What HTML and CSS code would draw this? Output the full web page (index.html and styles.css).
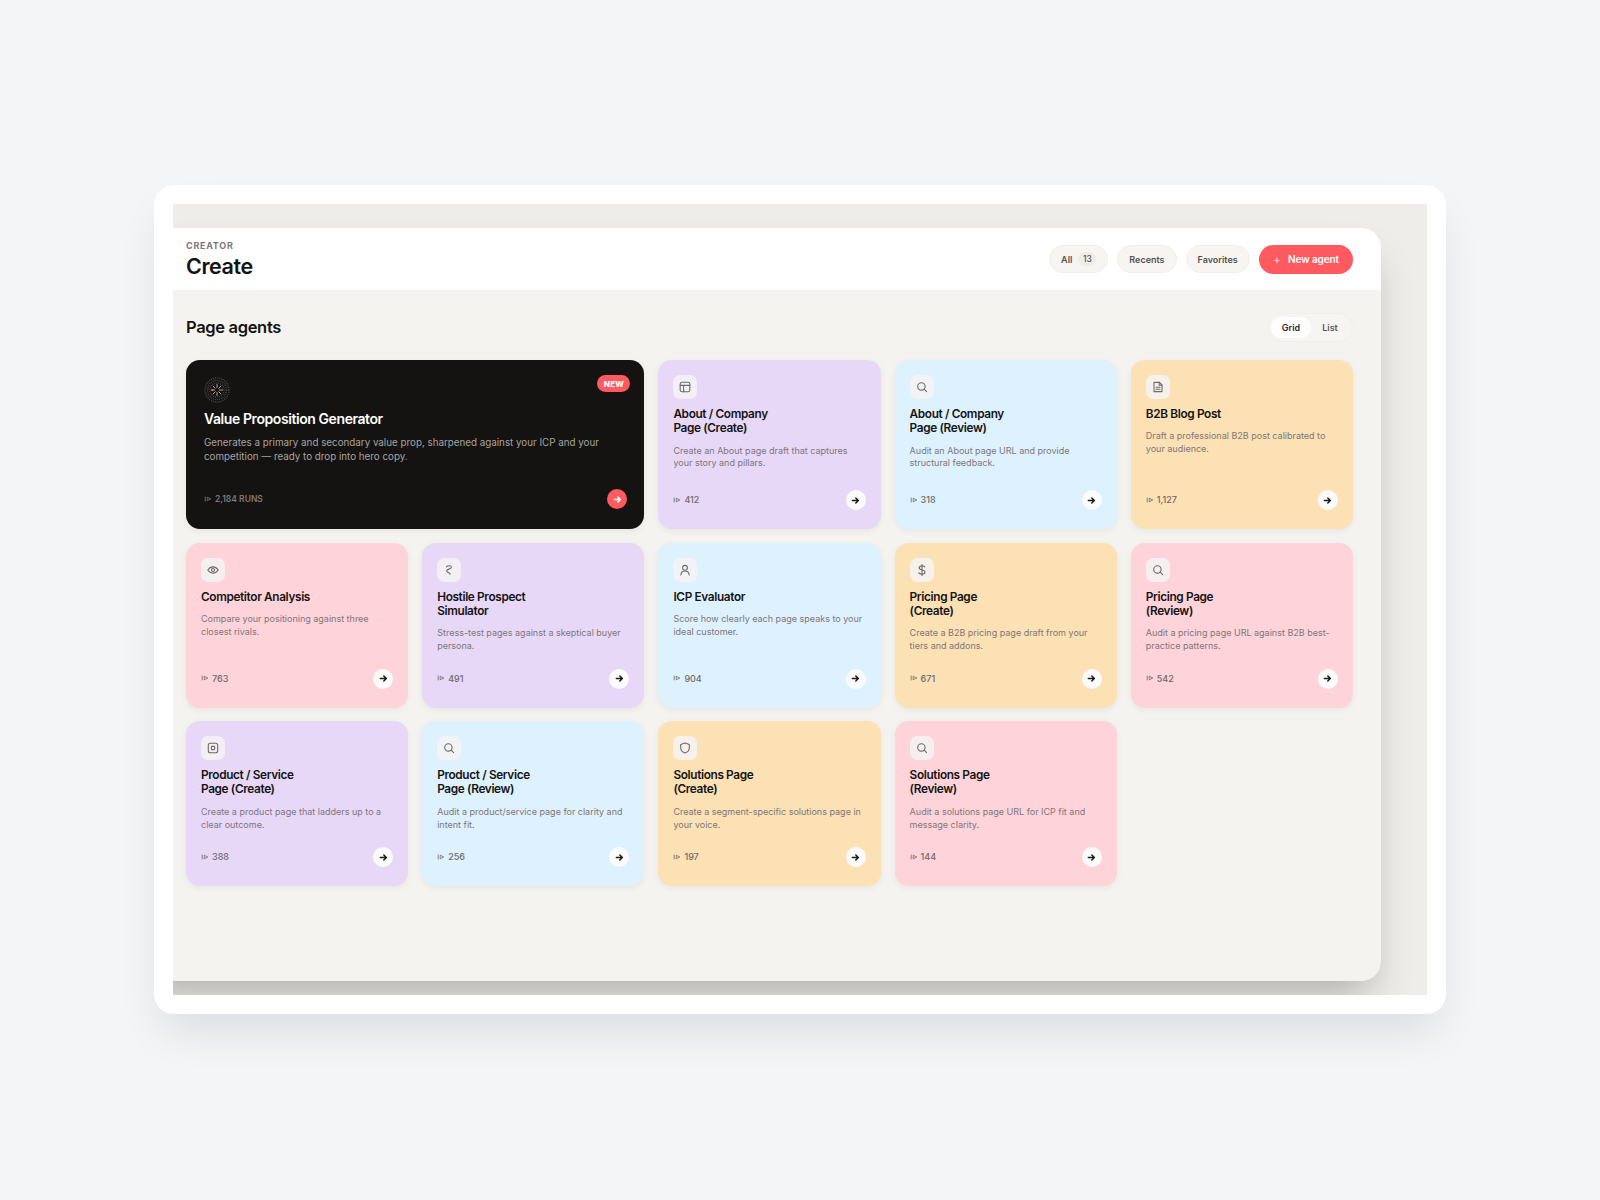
FILE: index.html
```html
<!DOCTYPE html>
<html lang="en">
<head>
  <meta charset="UTF-8">
  <meta name="viewport" content="width=device-width, initial-scale=1.0">
  <title>Creator - Create</title>
  <link rel="stylesheet" href="styles.css">
</head>
<body>
  <svg class="sprite" width="0" height="0" aria-hidden="true">
    <symbol id="i-panel" viewBox="0 0 12 12"><rect x="1.2" y="1.2" width="9.6" height="9.6" rx="1.8"/><path d="M1.2 4.4h9.6M4.6 4.4v6.4"/></symbol>
    <symbol id="i-search" viewBox="0 0 12 12"><circle cx="5.4" cy="5.4" r="3.7"/><path d="M8.2 8.2l2.4 2.4"/></symbol>
    <symbol id="i-doc" viewBox="0 0 12 12"><path d="M2 1.4h5.4L10 4v6.6H2z"/><path d="M7.2 1.4v2.8H10M4 6.2h4M4 8.2h4"/></symbol>
    <symbol id="i-eye" viewBox="0 0 12 12"><path d="M.8 6C2.2 3.9 4 2.9 6 2.9S9.8 3.9 11.2 6C9.8 8.1 8 9.1 6 9.1S2.2 8.1.8 6z"/><circle cx="6" cy="6" r="1.5"/></symbol>
    <symbol id="i-hook" viewBox="0 0 12 12"><path d="M3.4 2.8C4.6 1.6 8.4 1.2 8.4 3.2 8.4 5.2 3.6 5 3.6 6.8c0 1.4 2.6 1.2 3.6 3.4"/></symbol>
    <symbol id="i-user" viewBox="0 0 12 12"><circle cx="6" cy="3.8" r="2.4"/><path d="M1.8 11c.3-2.6 2-4 4.2-4s3.9 1.4 4.2 4"/></symbol>
    <symbol id="i-dollar" viewBox="0 0 12 12"><path d="M6 .6v10.8M8.8 3C8.2 2.2 7.2 1.9 6 1.9 4.4 1.9 3.2 2.7 3.2 3.9 3.2 6.6 9 5.3 9 8 9 9.3 7.7 10.1 6 10.1c-1.3 0-2.5-.4-3.2-1.3"/></symbol>
    <symbol id="i-box" viewBox="0 0 12 12"><rect x="1.3" y="1.3" width="9.4" height="9.4" rx="2"/><rect x="4.4" y="4.4" width="3.2" height="3.2" rx=".6"/></symbol>
    <symbol id="i-shield" viewBox="0 0 12 12"><path d="M6 .9l4.3 1.5v3.4c0 2.6-1.8 4.4-4.3 5.3-2.5-.9-4.3-2.7-4.3-5.3V2.4z"/></symbol>
    <symbol id="i-arrow" viewBox="0 0 12 12"><path d="M1.8 6h8M6.4 2.6L9.8 6 6.4 9.4"/></symbol>
    <symbol id="i-run" viewBox="0 0 10 10"><path d="M1.5 2v6M4 2.8L8.5 5 4 7.2z"/></symbol>
  </svg>

  <div class="frame">
    <div class="backdrop">
      <div class="app">
        <header class="topbar">
          <div class="topbar-title">
            <p class="eyebrow">CREATOR</p>
            <h1>Create</h1>
          </div>
          <nav class="filters">
            <a class="chip">All <span class="chip-count">13</span></a>
            <a class="chip">Recents</a>
            <a class="chip">Favorites</a>
            <a class="btn-new"><span class="btn-plus">+</span> New agent</a>
          </nav>
        </header>

        <main class="content">
          <div class="section-head">
            <h2>Page agents</h2>
            <div class="view-toggle">
              <span class="view-opt active">Grid</span>
              <span class="view-opt">List</span>
            </div>
          </div>

          <div class="agent-grid">
            <article class="card card-hero">
              <span class="badge-new">NEW</span>
              <svg class="hero-mark" viewBox="0 0 26 26" aria-hidden="true">
                <circle cx="13" cy="13" r="12" class="ring"/>
                <circle cx="13" cy="13" r="9.5" class="ring"/>
                <circle cx="13" cy="13" r="7" class="ring"/>
                <path class="rays" d="M13 7.5v3M13 15.5v3M7.5 13h3M15.5 13h3M9.1 9.100l2.100 2.100M14.800 14.800l2.100 2.100M16.900 9.100l-2.100 2.100M11.200 14.800l-2.100 2.100"/>
                <circle cx="8.5" cy="13" r="1" class="spark"/>
              </svg>
              <h3>Value Proposition Generator</h3>
              <p class="desc">Generates a primary and secondary value prop, sharpened against your ICP and your competition — ready to drop into hero copy.</p>
              <div class="card-foot">
                <span class="runs"><svg><use href="#i-run"/></svg>2,184 RUNS</span>
                <span class="go"><svg><use href="#i-arrow"/></svg></span>
              </div>
            </article>

            <article class="card card-purple">
              <span class="tile"><svg><use href="#i-panel"/></svg></span>
              <h3>About / Company<br>Page (Create)</h3>
              <p class="desc">Create an About page draft that captures your story and pillars.</p>
              <div class="card-foot">
                <span class="runs"><svg><use href="#i-run"/></svg>412</span>
                <span class="go"><svg><use href="#i-arrow"/></svg></span>
              </div>
            </article>

            <article class="card card-blue">
              <span class="tile"><svg><use href="#i-search"/></svg></span>
              <h3>About / Company<br>Page (Review)</h3>
              <p class="desc">Audit an About page URL and provide structural feedback.</p>
              <div class="card-foot">
                <span class="runs"><svg><use href="#i-run"/></svg>318</span>
                <span class="go"><svg><use href="#i-arrow"/></svg></span>
              </div>
            </article>

            <article class="card card-amber">
              <span class="tile"><svg><use href="#i-doc"/></svg></span>
              <h3>B2B Blog Post</h3>
              <p class="desc">Draft a professional B2B post calibrated to your audience.</p>
              <div class="card-foot">
                <span class="runs"><svg><use href="#i-run"/></svg>1,127</span>
                <span class="go"><svg><use href="#i-arrow"/></svg></span>
              </div>
            </article>

            <article class="card card-pink">
              <span class="tile"><svg><use href="#i-eye"/></svg></span>
              <h3>Competitor Analysis</h3>
              <p class="desc">Compare your positioning against three closest rivals.</p>
              <div class="card-foot">
                <span class="runs"><svg><use href="#i-run"/></svg>763</span>
                <span class="go"><svg><use href="#i-arrow"/></svg></span>
              </div>
            </article>

            <article class="card card-purple">
              <span class="tile"><svg><use href="#i-hook"/></svg></span>
              <h3>Hostile Prospect<br>Simulator</h3>
              <p class="desc">Stress-test pages against a skeptical buyer persona.</p>
              <div class="card-foot">
                <span class="runs"><svg><use href="#i-run"/></svg>491</span>
                <span class="go"><svg><use href="#i-arrow"/></svg></span>
              </div>
            </article>

            <article class="card card-blue">
              <span class="tile"><svg><use href="#i-user"/></svg></span>
              <h3>ICP Evaluator</h3>
              <p class="desc">Score how clearly each page speaks to your ideal customer.</p>
              <div class="card-foot">
                <span class="runs"><svg><use href="#i-run"/></svg>904</span>
                <span class="go"><svg><use href="#i-arrow"/></svg></span>
              </div>
            </article>

            <article class="card card-amber">
              <span class="tile"><svg><use href="#i-dollar"/></svg></span>
              <h3>Pricing Page<br>(Create)</h3>
              <p class="desc">Create a B2B pricing page draft from your tiers and addons.</p>
              <div class="card-foot">
                <span class="runs"><svg><use href="#i-run"/></svg>671</span>
                <span class="go"><svg><use href="#i-arrow"/></svg></span>
              </div>
            </article>

            <article class="card card-pink">
              <span class="tile"><svg><use href="#i-search"/></svg></span>
              <h3>Pricing Page<br>(Review)</h3>
              <p class="desc">Audit a pricing page URL against B2B best-practice patterns.</p>
              <div class="card-foot">
                <span class="runs"><svg><use href="#i-run"/></svg>542</span>
                <span class="go"><svg><use href="#i-arrow"/></svg></span>
              </div>
            </article>

            <article class="card card-purple">
              <span class="tile"><svg><use href="#i-box"/></svg></span>
              <h3>Product / Service<br>Page (Create)</h3>
              <p class="desc">Create a product page that ladders up to a clear outcome.</p>
              <div class="card-foot">
                <span class="runs"><svg><use href="#i-run"/></svg>388</span>
                <span class="go"><svg><use href="#i-arrow"/></svg></span>
              </div>
            </article>

            <article class="card card-blue">
              <span class="tile"><svg><use href="#i-search"/></svg></span>
              <h3>Product / Service<br>Page (Review)</h3>
              <p class="desc">Audit a product/service page for clarity and intent fit.</p>
              <div class="card-foot">
                <span class="runs"><svg><use href="#i-run"/></svg>256</span>
                <span class="go"><svg><use href="#i-arrow"/></svg></span>
              </div>
            </article>

            <article class="card card-amber">
              <span class="tile"><svg><use href="#i-shield"/></svg></span>
              <h3>Solutions Page<br>(Create)</h3>
              <p class="desc">Create a segment-specific solutions page in your voice.</p>
              <div class="card-foot">
                <span class="runs"><svg><use href="#i-run"/></svg>197</span>
                <span class="go"><svg><use href="#i-arrow"/></svg></span>
              </div>
            </article>

            <article class="card card-pink">
              <span class="tile"><svg><use href="#i-search"/></svg></span>
              <h3>Solutions Page<br>(Review)</h3>
              <p class="desc">Audit a solutions page URL for ICP fit and message clarity.</p>
              <div class="card-foot">
                <span class="runs"><svg><use href="#i-run"/></svg>144</span>
                <span class="go"><svg><use href="#i-arrow"/></svg></span>
              </div>
            </article>
          </div>
        </main>
      </div>
    </div>
  </div>
</body>
</html>
```

FILE: styles.css
```css
* {
  box-sizing: border-box;
}

body {
  margin: 0;
  min-height: 1200px;
  background: #f4f5f7;
  color: #141312;
  font-family: Inter, "Liberation Sans", sans-serif;
}

.sprite {
  position: absolute;
}

.frame {
  width: 1292px;
  height: 829px;
  margin: 185px 0 0 154px;
  padding: 19px;
  background: #fff;
  border-radius: 20px;
  box-shadow: 0 24px 44px -8px rgba(30, 30, 40, 0.11);
}

.backdrop {
  height: 100%;
  padding: 24px 46px 14px 0;
  background: #eeede9;
  overflow: hidden;
}

/* the window runs off the left of the backdrop */
.app {
  height: 100%;
  margin-left: -40px;
  background: #f4f3ef;
  border-radius: 20px;
  overflow: hidden;
  box-shadow: 0 24px 40px -10px rgba(0, 0, 0, 0.26);
}

/* top bar */
.topbar {
  height: 62px;
  padding: 0 28px 0 53px;
  display: flex;
  justify-content: space-between;
  align-items: center;
  background: #fff;
}

.topbar-title {
  margin-top: 1px;
}

.eyebrow {
  margin: 0;
  font-size: 9px;
  line-height: 11px;
  font-weight: 700;
  letter-spacing: 0.08em;
  color: #7b7776;
}

h1 {
  margin: 2px 0 0;
  font-size: 21.5px;
  line-height: 26px;
  font-weight: 600;
  letter-spacing: -0.02em;
}

.filters {
  display: flex;
  align-items: center;
  gap: 9px;
}

.chip {
  height: 28px;
  padding: 0 11px;
  display: flex;
  align-items: center;
  gap: 6px;
  background: #f6f5f2;
  border: 1px solid #f0efeb;
  border-radius: 14px;
  font-size: 9px;
  font-weight: 600;
  color: #55514f;
}

.chip-count {
  width: 18px;
  height: 14px;
  display: flex;
  align-items: center;
  justify-content: center;
  background: #eeede9;
  border-radius: 7px;
  font-size: 8.5px;
  font-weight: 500;
}

.btn-new {
  height: 29px;
  padding: 0 14px;
  display: flex;
  align-items: center;
  gap: 7px;
  background: #ff5a5f;
  border-radius: 15px;
  font-size: 10px;
  font-weight: 600;
  letter-spacing: -0.01em;
  color: #fff;
}

.btn-plus {
  font-size: 13px;
  font-weight: 300;
  line-height: 1;
  opacity: 0.8;
}

/* content */
.content {
  padding: 23px 28px 0 53px;
}

.section-head {
  height: 29px;
  display: flex;
  justify-content: space-between;
  align-items: center;
}

h2 {
  margin: -2px 0 0;
  font-size: 16.5px;
  font-weight: 600;
  letter-spacing: -0.02em;
}

.view-toggle {
  height: 29px;
  width: 86px;
  padding: 3px;
  display: flex;
  background: #f6f5f2;
  border: 1px solid #f0efeb;
  border-radius: 15px;
  font-size: 9px;
  font-weight: 600;
}

.view-opt {
  flex: 1;
  display: flex;
  align-items: center;
  justify-content: center;
  border-radius: 11px;
  color: #5a5755;
}

.view-opt.active {
  flex: 0 0 40px;
  background: #fff;
  color: #2c2a29;
}

.agent-grid {
  margin-top: 18px;
  display: grid;
  grid-template-columns: repeat(5, 1fr);
  grid-template-rows: 169px 165px 165px;
  gap: 13.6px 14px;
}

/* cards */
.card {
  position: relative;
  padding: 15px 15px 19px;
  display: flex;
  flex-direction: column;
  align-items: flex-start;
  border-radius: 14px;
  box-shadow: 0 2px 7px rgba(0, 0, 0, 0.06);
}

.card-purple { background: #e7d8f8; }
.card-blue { background: #ddf1fe; }
.card-amber { background: #fbe1b4; }
.card-pink { background: #fed3d9; }

.tile {
  width: 24px;
  height: 24px;
  display: flex;
  align-items: center;
  justify-content: center;
  background: rgba(244, 243, 243, 0.85);
  border-radius: 7px;
}

.tile svg {
  width: 12px;
  height: 12px;
  fill: none;
  stroke: #6f6a6b;
  stroke-width: 1.1;
  stroke-linecap: round;
  stroke-linejoin: round;
}

h3 {
  margin: 8px 0 0;
  font-size: 11.8px;
  line-height: 14.3px;
  font-weight: 600;
  letter-spacing: -0.03em;
}

.desc {
  margin: 9px 0 0;
  font-size: 9px;
  line-height: 12.8px;
  color: #7f7679;
}

.card-foot {
  width: 100%;
  margin-top: auto;
  display: flex;
  justify-content: space-between;
  align-items: center;
}

.runs {
  margin-top: -1px;
  display: flex;
  align-items: center;
  gap: 3px;
  font-size: 9px;
  font-weight: 500;
  color: #6f696b;
}

.runs svg {
  width: 8px;
  height: 8px;
  fill: none;
  stroke: currentColor;
  stroke-width: 1;
}

.go {
  width: 20px;
  height: 20px;
  display: flex;
  align-items: center;
  justify-content: center;
  background: #fbfbfb;
  border-radius: 50%;
}

.go svg {
  width: 9px;
  height: 9px;
  fill: none;
  stroke: #1d1b1a;
  stroke-width: 2;
  stroke-linecap: round;
  stroke-linejoin: round;
}

/* hero card */
.card-hero {
  grid-column: span 2;
  padding: 17px 18px 20px;
  background: #141312;
  color: #fff;
}

.hero-mark {
  width: 26px;
  height: 26px;
  fill: none;
}

.hero-mark .ring {
  stroke: #454342;
  stroke-width: 1.5;
  stroke-dasharray: 1 1;
}

.hero-mark .rays {
  stroke: #a9a5a3;
  stroke-width: 1;
  stroke-linecap: round;
}

.hero-mark .spark {
  fill: #ff5a5f;
}

.card-hero h3 {
  margin-top: 7px;
  font-size: 14px;
  line-height: 18px;
}

.card-hero .desc {
  margin-top: 8px;
  font-size: 9.8px;
  line-height: 14.3px;
  color: #a8a3a0;
}

.card-hero .runs {
  font-size: 8.5px;
  font-weight: 600;
  color: #7d7977;
}

.card-hero .go {
  margin-right: -1px;
  background: #ff5a5f;
}

.card-hero .go svg {
  stroke: #fff;
}

.badge-new {
  position: absolute;
  top: 15px;
  right: 14px;
  width: 33px;
  height: 17px;
  display: flex;
  align-items: center;
  justify-content: center;
  background: #ff5a5f;
  border-radius: 9px;
  font-size: 8px;
  font-weight: 800;
  letter-spacing: 0.03em;
  color: #fff;
}
```
